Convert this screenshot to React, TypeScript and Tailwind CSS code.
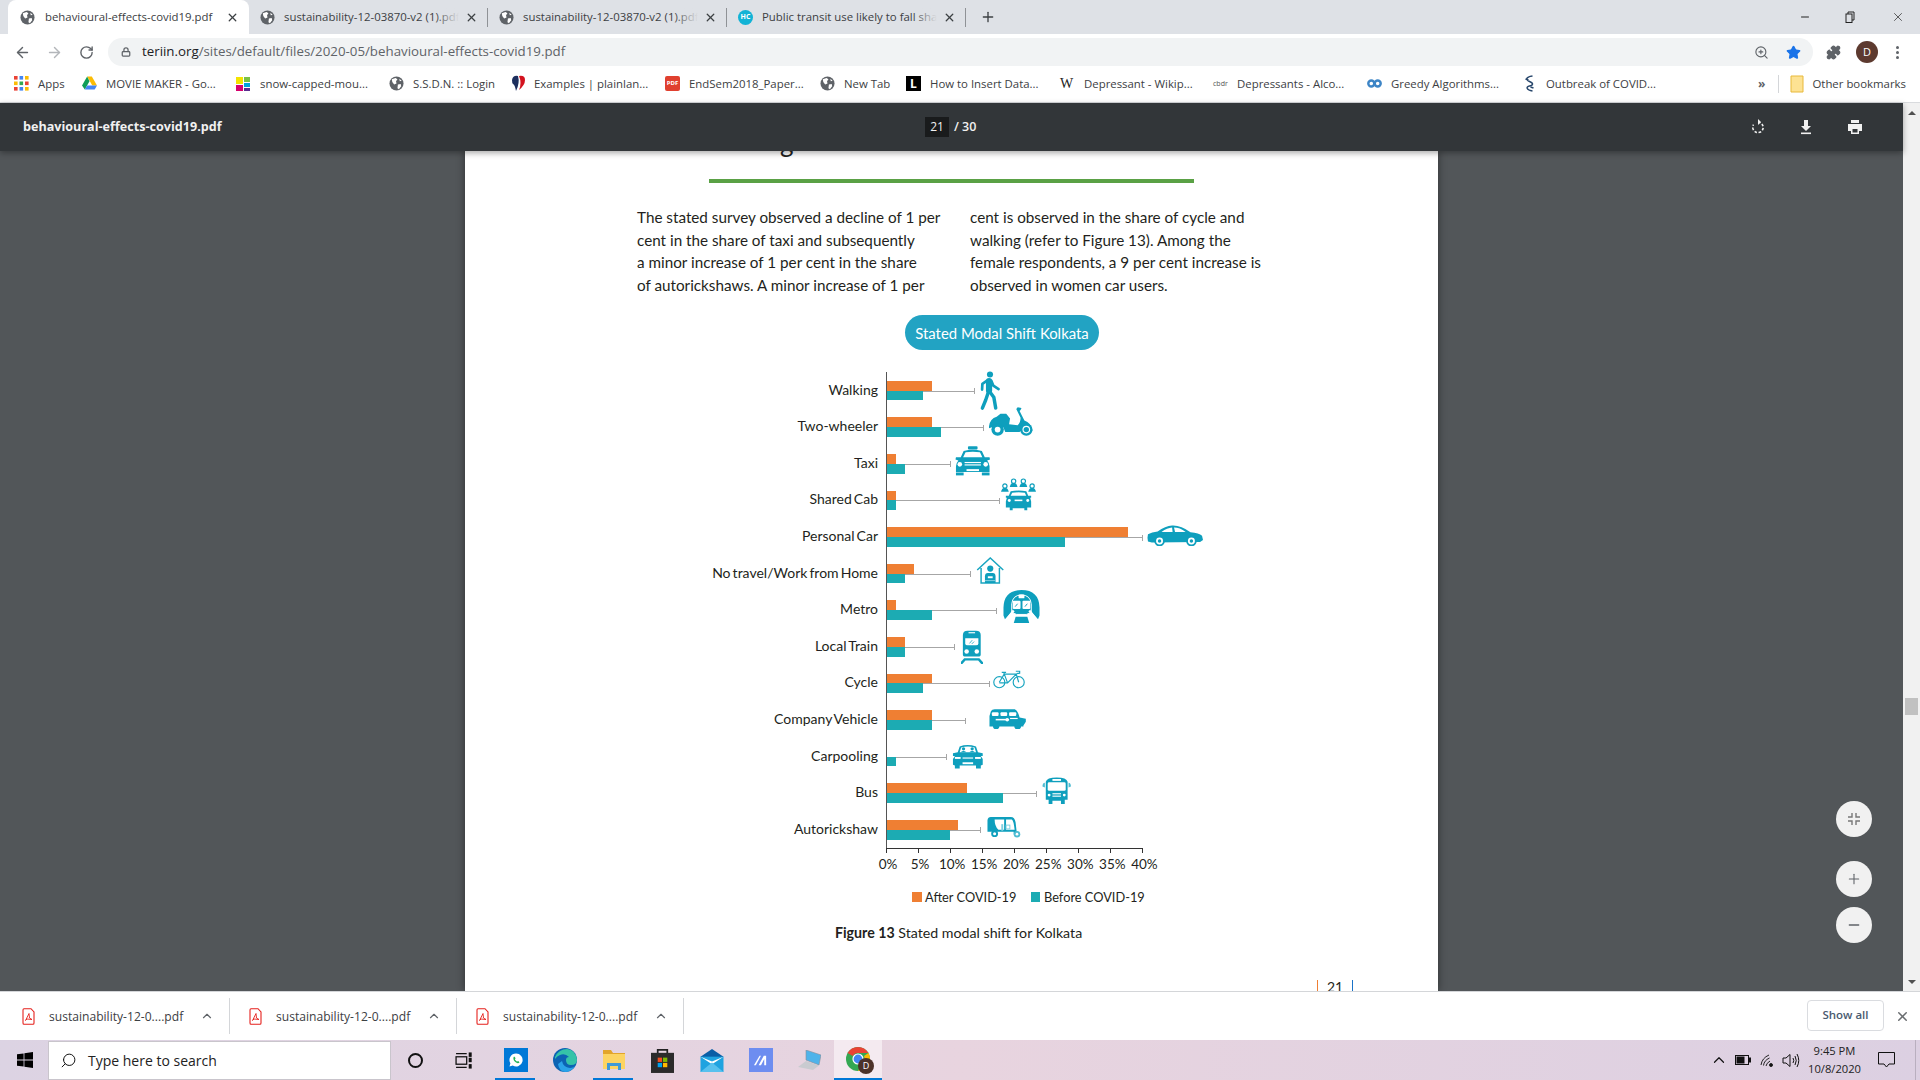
import React from "react";
import { ArrowLeft, ArrowRight, RotateCw, Lock, ZoomIn, Star, Puzzle, X, Plus, Minus, ChevronUp, Search } from "lucide-react";

const Globe = ({ className = "" }: { className?: string }) => (
  <svg viewBox="0 0 16 16" className={className}>
    <circle cx="8" cy="8" r="7.5" fill="#5f6368" />
    <path d="M3 3.5 L7 2 L9 3.5 L7.5 5.5 L8 8 L5.5 9 L3.5 6.5Z M9.5 9 L12.5 8.5 L13 11 L10.5 14 L9 13Z M11 3 L13.5 5 L11.5 5.5Z" fill="#fff" />
  </svg>
);

function Tab({ title, icon, divider = true }: { title: string; icon: React.ReactNode; divider?: boolean }) {
  return (
    <div className="relative flex h-[34px] w-[239px] shrink-0 items-center pl-[11px]">
      {icon}
      <span className="relative ml-[9px] w-[175px] overflow-hidden whitespace-nowrap text-[11.4px] text-[#3c4043]">
        {title}
        <span className="absolute right-0 top-0 h-full w-[24px] bg-gradient-to-r from-transparent to-[#dee1e6]" />
      </span>
      <X size={13} strokeWidth={2.4} className="ml-[6px] text-[#3c4043]" />
      {divider && <span className="absolute right-0 top-[8px] h-[19px] w-px bg-[#8f9296]" />}
    </div>
  );
}

const marks = [
  { w: "w-[68px]", t: "Apps", i: <svg viewBox="0 0 15 15" className="h-[15px] w-[15px]">{[0, 5.5, 11].map((x, a) => [0, 5.5, 11].map((y, b) => <rect key={`${a}${b}`} x={x} y={y} width="3.6" height="3.6" fill={["#ea4335", "#4285f4", "#fbbc05", "#34a853"][(a + b * 2) % 4]} />))}</svg> },
  { w: "w-[154px]", t: "MOVIE MAKER - Go...", i: <svg viewBox="0 0 16 15" className="h-[15px] w-[15px]"><path d="M5.5 0H10.5L16 9.5H11Z" fill="#fbbc05" /><path d="M5.5 0L8 5 3 14 0 9.5Z" fill="#0f9d58" /><path d="M3 14L5.5 9.5H16L13.5 14Z" fill="#4285f4" /></svg> },
  { w: "w-[153px]", t: "snow-capped-mou...", i: <svg viewBox="0 0 14 14" className="h-[14px] w-[14px]"><rect width="7" height="7" fill="#f4e300" /><rect x="8" width="6" height="5" fill="#7ac143" /><rect y="8" width="7" height="6" fill="#d6006d" /><rect x="8" y="6" width="6" height="4" fill="#00a3da" /><rect x="8" y="11" width="6" height="3" fill="#5b2d90" /></svg> },
  { w: "w-[121px]", t: "S.S.D.N. :: Login", i: <Globe className="h-[15px] w-[15px]" /> },
  { w: "w-[155px]", t: "Examples | plainlan...", i: <svg viewBox="0 0 17 17" className="h-[17px] w-[17px]"><path d="M2 5 Q3 0 8 1 Q10 8 6 16 Q5 10 3 9 Q2 8 2 5Z" fill="#1d2f5e" /><path d="M9 1 Q15 0 15 5 Q15 10 9 15 Q12 8 9 1Z" fill="#d3121e" /></svg> },
  { w: "w-[155px]", t: "EndSem2018_Paper...", i: <span className="flex h-[15px] w-[15px] items-center justify-center rounded-[2px] bg-[#e0402f] text-[6px] font-bold text-white">PDF</span> },
  { w: "w-[86px]", t: "New Tab", i: <Globe className="h-[15px] w-[15px]" /> },
  { w: "w-[154px]", t: "How to Insert Data...", i: <span className="flex h-[15px] w-[15px] items-center justify-center bg-black text-[12px] font-bold leading-none text-white">L</span> },
  { w: "w-[153px]", t: "Depressant - Wikip...", i: <span className="w-[15px] font-['Liberation_Serif',serif] text-[14px] leading-none text-[#222]">W</span> },
  { w: "w-[154px]", t: "Depressants - Alco...", i: <span className="w-[15px] text-[7px] leading-none text-[#555]">cbdr</span> },
  { w: "w-[155px]", t: "Greedy Algorithms...", i: <svg viewBox="0 0 16 10" className="h-[15px] w-[15px]" fill="none" stroke="#3d85c6" strokeWidth="2.6"><circle cx="4.6" cy="5" r="3.2" /><circle cx="11.4" cy="5" r="3.2" /></svg> },
  { w: "w-[140px]", t: "Outbreak of COVID...", i: <svg viewBox="0 0 14 17" className="h-[17px] w-[15px]" fill="none" stroke="#27466b" strokeWidth="1.5"><path d="M10 1 C3 2 3 5 7 6.5 C11 8 11 10 7 11 C3 12 4 15 10 16 M3 4 L6 5 M8 12 L11 13" /></svg> },
];

const rows: { label: string; a: number; b: number; end: number; icon: React.ReactNode }[] = [
  {
    label: "Walking", a: 45, b: 36, end: 87,
    icon: <svg viewBox="0 0 21 40" className="absolute left-[92.5px] top-[-1.7px] h-[39px] w-[20px] overflow-visible" fill="none" stroke="#0e9fbd" strokeLinecap="round" strokeLinejoin="round"><circle cx="10.5" cy="3.2" r="3.2" fill="#0e9fbd" stroke="none" /><path d="M9.5 10 L9.5 20" strokeWidth="6.5" /><path d="M7 10 L2.5 13 L2.2 19" strokeWidth="2.8" /><path d="M12 10 L14 15 L19.5 18.5" strokeWidth="2.8" /><path d="M9 21 L6 30 L2.5 38.5" strokeWidth="3.6" /><path d="M10 21 L14.5 27 L16.5 38.5" strokeWidth="3.6" /></svg>,
  },
  {
    label: "Two-wheeler", a: 45, b: 54, end: 96,
    icon: <svg viewBox="0 0 46 31" className="absolute left-[102px] top-[-3.3px] h-[30px] w-[44px]" fill="#0e9fbd"><path d="M0 21 Q1 13 8 11 L12 8 L18 8 L22 13 L21 19 L30 20 Q33 17 33 12 L28.5 3 L30 1 L34 2 L33 4 L32 5 L37 15 Q44 17 45.5 26 L33 26 L32 27 L17 27 L15 22 L3 22 L0 23Z" /><circle cx="9" cy="24.5" r="6.5" /><circle cx="9" cy="24.5" r="3" fill="#fff" /><circle cx="39" cy="24.5" r="6.5" /><circle cx="39" cy="24.5" r="4" fill="#fff" /><circle cx="39" cy="24.5" r="2.8" /></svg>,
  },
  {
    label: "Taxi", a: 9, b: 18, end: 63,
    icon: <FrontCar className="absolute left-[68px] top-[0px] h-[30px] w-[35.5px]" taxi />,
  },
  {
    label: "Shared Cab", a: 9, b: 9, end: 112,
    icon: (
      <svg viewBox="0 0 36 33" className="absolute left-[113.5px] top-[-4px] h-[32.5px] w-[35px]" fill="#0e9fbd">
        {[[4, 6], [13, 1], [23, 1], [32, 6]].map(([x, y]) => (
          <g key={x}><circle cx={x} cy={y + 2} r="2.2" fill="#fff" stroke="#0e9fbd" strokeWidth="1.2" /><path d={`M${x - 4} ${y + 8} Q${x - 3} ${y + 4} ${x - 1} ${y + 4} L${x + 1} ${y + 4} Q${x + 3} ${y + 4} ${x + 4} ${y + 8}Z`} /></g>
        ))}
        <path d="M8 18 L10 13.5 Q18 12 26 13.5 L28 18 L31 18 L31 20 L30 20 L31 24 L31 30 L27 30 L27 33 L24 33 L24 31 L12 31 L12 33 L9 33 L9 30 L5 30 L5 24 L6 20 L5 20 L5 18Z" />
        <path d="M10 18 L11.5 15 Q18 14 24.5 15 L26 18Z" fill="#fff" /><circle cx="8.5" cy="23" r="1.5" fill="#fff" /><circle cx="27.5" cy="23" r="1.5" fill="#fff" /><rect x="14" y="22" width="8" height="1.6" fill="#fff" />
      </svg>
    ),
  },
  {
    label: "Personal Car", a: 240.5, b: 178, end: 255,
    icon: <svg viewBox="0 0 58 22" className="absolute left-[259.5px] top-[6px] h-[21.5px] w-[56px]" fill="#0e9fbd"><path d="M0.5 13 L1 9.5 Q5 7 11 6.5 Q19 1 26 0.5 Q35 0 45 7.5 Q54 8.5 57 11 L58 15.5 L55 17.5 L5 18 L1 17Z" /><path d="M15 7 Q21 3 26 2.5 L26.5 7Z" fill="#fff" /><path d="M28 2.5 Q34 2.5 40 7 L29 7Z" fill="#fff" /><circle cx="13" cy="16.5" r="5.5" /><circle cx="13" cy="16.5" r="3.6" fill="#fff" /><circle cx="13" cy="16.5" r="1.8" /><circle cx="46" cy="16.5" r="5.5" /><circle cx="46" cy="16.5" r="3.6" fill="#fff" /><circle cx="46" cy="16.5" r="1.8" /></svg>,
  },
  {
    label: "No travel/Work from Home", a: 27, b: 18, end: 83,
    icon: <svg viewBox="0 0 29 28" className="absolute left-[89px] top-[1.3px] h-[27px] w-[28.5px]" fill="none" stroke="#18a5c0" strokeWidth="1.5"><path d="M1 13.5 L14.5 1 L28 13.5 M5 11.5 V27 H24 V11.5" /><circle cx="14.5" cy="12" r="3.2" fill="#0e9fbd" stroke="none" /><path d="M9 27 V20 Q9 16.5 12 16.5 H17 Q20 16.5 20 20 V27Z" fill="#0e9fbd" stroke="none" /><rect x="12" y="20" width="5" height="2" fill="#fff" stroke="none" /><path d="M9 24.5 H20" stroke="#8fd3e2" strokeWidth="1" /></svg>,
  },
  {
    label: "Metro", a: 9, b: 45, end: 109,
    icon: <svg viewBox="0 0 38 34" className="absolute left-[115.5px] top-[-2.3px] h-[33.3px] w-[37px]" fill="#0e9fbd"><path d="M0.5 26 V18 Q1 0 19 0 Q37 0 37.5 18 V26 L36 30 L29 22 V15 Q28 6 19 6 Q10 6 9 15 V22 L2 30Z" /><path d="M9 14 Q10 5 19 5 Q28 5 29 14 V23 L24 25 H14 L9 23Z" fill="#0e9fbd" stroke="#fff" strokeWidth="1" /><rect x="16" y="4.5" width="6" height="4" rx="1" fill="#fff" /><rect x="10" y="11" width="8" height="8.5" rx="1" fill="#fff" /><rect x="20" y="11" width="8" height="8.5" rx="1" fill="#fff" /><path d="M12.5 17 L15 14 M22.5 17 L25 14" stroke="#0e9fbd" strokeWidth="1" /><path d="M13 27.5 H25 L27 34 H11Z" /><path d="M11 21 L5 29 M27 21 L33 29" stroke="#fff" strokeWidth="2.4" /></svg>,
  },
  {
    label: "Local Train", a: 18, b: 18, end: 67,
    icon: <svg viewBox="0 0 23 36" className="absolute left-[74px] top-[1px] h-[34.4px] w-[21.6px]" fill="#0e9fbd"><path d="M2 5 Q2 0.5 7 0.5 H16 Q21 0.5 21 5 V26 Q21 28 18 28 H5 Q2 28 2 26Z" /><rect x="8" y="2" width="7" height="1.2" fill="#fff" /><path d="M4.5 8.5 H18.5 V14 Q18.5 16 16 16 H7 Q4.5 16 4.5 14Z" fill="#fff" /><path d="M9 14 L12 10.5 M11.5 14.5 L14 12" stroke="#0e9fbd" strokeWidth="0.8" /><circle cx="6" cy="22.5" r="2.4" fill="#fff" /><circle cx="16.8" cy="22.5" r="2.4" fill="#fff" /><path d="M0.5 35 L4 31 H19 L22.5 35" fill="none" stroke="#0e9fbd" strokeWidth="2.6" strokeLinecap="round" /></svg>,
  },
  {
    label: "Cycle", a: 45, b: 36, end: 102,
    icon: <svg viewBox="0 0 33 19" className="absolute left-[106px] top-[4.8px] h-[19px] w-[32px]" fill="none" stroke="#18a5c0" strokeWidth="1"><circle cx="6.5" cy="12.3" r="5.7" strokeWidth="1.2" /><circle cx="26.5" cy="12.3" r="5.7" strokeWidth="1.2" /><path d="M6.5 12.3 L11.5 4 H24 L15 13 H6.5 M11 2.2 L15 13 M24 4 L26.5 12.3 M23.5 1 H27.5 V3 L24.5 3.5 M9 2.2 H13.5" strokeWidth="1.2" /></svg>,
  },
  {
    label: "Company Vehicle", a: 45, b: 45, end: 78,
    icon: <svg viewBox="0 0 39 21" className="absolute left-[102px] top-[7px] h-[20.7px] w-[37.3px]" fill="#0e9fbd"><path d="M0.5 17 V7 L2 2 Q3 0 6 0 H27 Q30 1 32 8.5 L38.5 10 V13 L36 17 L36 18 H0.5Z" /><rect x="3" y="3" width="7" height="4" rx="1" fill="#fff" /><rect x="12" y="3" width="7" height="4" rx="1" fill="#fff" /><rect x="21" y="3" width="7.5" height="4" rx="1" fill="#fff" /><rect x="7" y="10" width="14" height="1.6" fill="#fff" /><circle cx="19" cy="11" r="1.8" fill="#fff" /><rect x="22" y="9" width="8" height="1.2" fill="#fff" /><circle cx="7.5" cy="17.5" r="3.4" /><circle cx="30" cy="17.5" r="3.6" /></svg>,
  },
  {
    label: "Carpooling", a: 0, b: 9, end: 59,
    icon: (
      <svg viewBox="0 0 33 25" className="absolute left-[64.5px] top-[5.6px] h-[25px] w-[31.7px]" fill="#0e9fbd">
        <path d="M6 8 L8 2 Q16 -1 25 2 L27 8 L32 9 L32 12 L30 12 L32 15 V21 L30 22 V25 H25 V22 H8 V25 H3 V22 L1 21 V15 L3 12 L1 12 L1 9Z" />
        <path d="M8 8 L9.5 3 Q16.5 1 23.5 3 L25 8Z" fill="#fff" /><circle cx="12" cy="4.5" r="1.7" /><circle cx="21" cy="4.5" r="1.7" /><path d="M9 8 Q12 5.5 15 8Z M18 8 Q21 5.5 24 8Z" />
        <rect x="3" y="13" width="6" height="2" fill="#fff" /><rect x="24" y="13" width="6" height="2" fill="#fff" /><rect x="11" y="13.5" width="11" height="1.2" fill="#fff" /><rect x="11" y="18.5" width="11" height="2" fill="#fff" />
      </svg>
    ),
  },
  {
    label: "Bus", a: 80, b: 116, end: 149,
    icon: <svg viewBox="0 0 31 29" className="absolute left-[155px] top-[1.7px] h-[27.7px] w-[29.4px]" fill="#0e9fbd"><path d="M4 5 Q5 0.5 15.5 0.5 Q26 0.5 27 5 V24 H24 V28.5 H20 V25 H11 V28.5 H7 V24 H4Z" /><rect x="11" y="2" width="9" height="2" fill="#fff" /><rect x="6" y="5.5" width="19" height="9" rx="1.5" fill="#fff" /><rect x="11" y="17" width="9" height="1.2" fill="#fff" /><rect x="11" y="19.5" width="9" height="1.2" fill="#fff" /><circle cx="7.5" cy="19" r="1.5" fill="#fff" /><circle cx="23.5" cy="19" r="1.5" fill="#fff" /><path d="M0.5 10 Q0.5 6 3 6 V11Z M30.5 10 Q30.5 6 28 6 V11Z" fill="#4fbcd2" /></svg>,
  },
  {
    label: "Autorickshaw", a: 71, b: 63, end: 93,
    icon: <svg viewBox="0 0 36 22" className="absolute left-[100px] top-[4.4px] h-[22px] w-[34.3px]" fill="#0e9fbd"><path d="M0.5 16 V4 Q1 0.5 4 0.5 H25 Q29 0.5 30 6 L31 15 L35 19 H28 V16 H0.5Z" /><path d="M8 3 H18 V14 H12 Q8 10 8 3Z M20 3 H26 Q28 4 29 14 H20Z" fill="#fff" /><rect x="15" y="8" width="2" height="7" fill="#7fd0e0" /><rect x="20" y="9" width="4" height="4" fill="none" stroke="#7fd0e0" /><circle cx="8" cy="18" r="3.6" /><circle cx="8" cy="18" r="1.6" fill="#fff" /><circle cx="31.5" cy="18.5" r="3.4" fill="#4fbcd2" /><circle cx="31.5" cy="18.5" r="1.4" fill="#fff" /></svg>,
  },
];

function FrontCar({ className = "", taxi = false }: { className?: string; taxi?: boolean }) {
  return (
    <svg viewBox="0 0 37 31" className={className} fill="#0e9fbd">
      {taxi && <rect x="13.5" y="0" width="10" height="3.4" rx="1" />}
      <path d="M6 11.5 L9 5 Q18.5 2.5 28 5 L31 11.5 L36 11.5 L36.5 14 L33.5 15 Q36 18 36 21 V27 H1 V21 Q1 18 3.5 15 L0.5 14 L1 11.5Z" />
      <path d="M8.5 11.5 L11 6.5 Q18.5 5 26 6.5 L28.5 11.5Z" fill="#fff" />
      <circle cx="5" cy="19" r="2.4" fill="#fff" /><circle cx="32" cy="19" r="2.4" fill="#fff" />
      <rect x="10" y="16.5" width="17" height="1.2" fill="#fff" /><rect x="10" y="19" width="17" height="1.2" fill="#fff" /><rect x="12" y="24" width="13" height="2" fill="#fff" />
      <rect x="1" y="27.5" width="8" height="3" /><rect x="28" y="27.5" width="8" height="3" />
    </svg>
  );
}

const pct = ["0%", "5%", "10%", "15%", "20%", "25%", "30%", "35%", "40%"];

const PdfIcon = () => (
  <svg viewBox="0 0 13 17" className="h-[17px] w-[13px]" fill="none" stroke="#e5211d" strokeWidth="1.1"><path d="M1 2 Q1 .7 2 .7 H9 L12 4 V15 Q12 16.3 11 16.3 H2 Q1 16.3 1 15Z" /><path d="M3.5 12.5 L7 5.5 L7.5 10 L10 11.5 L5 11Z" strokeWidth=".9" /></svg>
);

function DownloadItem() {
  return (
    <div className="relative flex h-[36px] w-[227px] shrink-0 items-center">
      <span className="ml-[19px]"><PdfIcon /></span>
      <span className="ml-[14px] mt-[2px] w-[151px] whitespace-nowrap text-[12.1px] text-[#3c4043]">sustainability-12-0....pdf</span>
      <ChevronUp size={14} strokeWidth={2} className="text-[#5f6368]" />
      <span className="absolute right-0 top-0 h-full w-px bg-[#d4d6d9]" />
    </div>
  );
}

const Round = ({ children }: { children: React.ReactNode }) => (
  <div className="flex h-[36px] w-[36px] items-center justify-center rounded-full bg-[#f1f1f1] text-[#5f6368]">{children}</div>
);

const Under = ({ children, bar = false }: { children: React.ReactNode; bar?: boolean }) => (
  <div className="relative flex h-full w-[49px] shrink-0 items-center justify-center">
    {children}
    {bar && <span className="absolute bottom-0 left-[4px] h-[2px] w-[40px] bg-[#0078d7]" />}
  </div>
);

export default function App() {
  return (
    <div className="flex h-[1080px] w-[1920px] flex-col overflow-hidden bg-white font-['Open_Sans',sans-serif]">
      {/* Tab strip */}
      <div className="flex h-[34px] shrink-0 items-center bg-[#dee1e6] pl-[8px]">
        <div className="flex h-[34px] w-[241px] shrink-0 items-center rounded-t-[8px] bg-white pl-[12px]">
          <Globe className="h-[15px] w-[15px]" />
          <span className="ml-[10px] w-[172px] whitespace-nowrap text-[11.4px] text-[#3c4043]">behavioural-effects-covid19.pdf</span>
          <X size={13} strokeWidth={2.4} className="ml-[9px] text-[#3c4043]" />
        </div>
        <Tab title="sustainability-12-03870-v2 (1).pdf" icon={<Globe className="h-[15px] w-[15px]" />} />
        <Tab title="sustainability-12-03870-v2 (1).pdf" icon={<Globe className="h-[15px] w-[15px]" />} />
        <Tab title="Public transit use likely to fall sharply" icon={<span className="flex h-[15px] w-[15px] items-center justify-center rounded-full bg-[#12b3d6] text-[7px] font-bold text-white">HC</span>} />
        <Plus size={16} strokeWidth={2} className="ml-[14px] text-[#3c4043]" />
        <div className="flex-1" />
        <Minus size={12} className="mr-[34px] text-[#222]" />
        <svg viewBox="0 0 10 12" className="mr-[36px] h-[12px] w-[10px]" fill="none" stroke="#222" strokeWidth="1"><rect x="1" y="3" width="6" height="8.5" /><path d="M3 3V1H9V9H7" /></svg>
        <X size={14} strokeWidth={1.2} className="mr-[15px] text-[#222]" />
      </div>
      {/* Toolbar */}
      <div className="flex h-[34px] shrink-0 items-center bg-white pl-[14px] pr-[14px] pt-[2px]">
        <ArrowLeft size={17} strokeWidth={2} className="text-[#5f6368]" />
        <ArrowRight size={17} strokeWidth={2} className="ml-[15px] text-[#b3b6ba]" />
        <RotateCw size={15} strokeWidth={2.2} className="ml-[16px] text-[#5f6368]" />
        <div className="ml-[14px] flex h-[28px] w-[1705px] items-center rounded-full bg-[#f1f3f4] pl-[13px] pr-[12px]">
          <Lock size={10} strokeWidth={3} className="text-[#5f6368]" />
          <span className="ml-[11px] whitespace-nowrap text-[13.3px] text-[#5f6368]"><span className="text-[#202124]">teriin.org</span>/sites/default/files/2020-05/behavioural-effects-covid19.pdf</span>
          <div className="flex-1" />
          <ZoomIn size={15} strokeWidth={1.8} className="text-[#5f6368]" />
          <Star size={15} className="ml-[17px] fill-[#1a73e8] text-[#1a73e8]" />
        </div>
        <Puzzle size={15} className="ml-[13px] fill-[#5f6368] text-[#5f6368]" />
        <span className="ml-[15px] flex h-[22px] w-[22px] items-center justify-center rounded-full bg-[#5d3a2f] text-[11px] text-white">D</span>
        <span className="ml-[18px] flex flex-col gap-[2px]"><i className="h-[3px] w-[3px] rounded-full bg-[#5f6368]" /><i className="h-[3px] w-[3px] rounded-full bg-[#5f6368]" /><i className="h-[3px] w-[3px] rounded-full bg-[#5f6368]" /></span>
      </div>
      {/* Bookmarks */}
      <div className="flex h-[35px] shrink-0 items-center border-b border-[#d9dbde] bg-white pb-[2px] pl-[14px]">
        {marks.map((m) => (
          <div key={m.t} className={`${m.w} flex shrink-0 items-center`}>
            <span className="flex w-[24px] shrink-0 items-center">{m.i}</span>
            <span className="whitespace-nowrap text-[11.4px] text-[#3c4043]">{m.t}</span>
          </div>
        ))}
        <div className="flex-1" />
        <span className="text-[12px] font-bold text-[#5f6368]">»</span>
        <span className="ml-[13px] h-[18px] w-px bg-[#d4d6d9]" />
        <svg viewBox="0 0 14 18" className="ml-[11px] h-[18px] w-[14px]"><path d="M1 1H13V17H1Z" fill="#fde293" stroke="#e8b93b" strokeWidth="1" /></svg>
        <span className="ml-[8px] mr-[14px] whitespace-nowrap text-[11.4px] text-[#3c4043]">Other bookmarks</span>
      </div>
      {/* Viewer */}
      <div className="flex min-h-0 flex-1">
        <div className="relative flex min-w-0 flex-1 flex-col bg-[#525659]">
          <div className="relative z-10 flex h-[48px] shrink-0 items-center bg-[#323639] shadow-[0_2px_6px_rgba(0,0,0,0.35)]">
            <span className="ml-[23px] w-[902px] text-[12.6px] font-bold text-[#f1f1f1]">behavioural-effects-covid19.pdf</span>
            <span className="flex h-[20px] w-[24px] items-center justify-center bg-[#191b1c] text-[12px] text-[#f1f1f1]">21</span>
            <span className="ml-[5px] text-[12.5px] font-semibold text-[#f1f1f1]">/ 30</span>
            <div className="flex-1" />
            <svg viewBox="0 0 16 16" className="mr-[32px] h-[16px] w-[16px]" fill="none" stroke="#f1f1f1" strokeWidth="1.6"><path d="M8 3.2A5.2 5.2 0 1 1 3.5 5.7" strokeDasharray="2.6 1.6" /><path d="M8 0V6L11 3Z" fill="#f1f1f1" stroke="none" /></svg>
            <svg viewBox="0 0 16 16" className="mr-[33px] h-[16px] w-[16px]" fill="#f1f1f1"><path d="M6 1H10V7H13L8 12 3 7H6Z" /><rect x="3" y="13.5" width="10" height="1.6" /></svg>
            <svg viewBox="0 0 16 16" className="mr-[40px] h-[16px] w-[16px]" fill="#f1f1f1"><path d="M4 1H12V4H4Z" /><path d="M1 5H15V12H12V15H4V12H1ZM5.5 10V13.5H10.5V10Z" fillRule="evenodd" /></svg>
          </div>
          <div className="min-h-0 flex-1 overflow-hidden pl-[465px]">
            <div className="relative h-[840px] w-[973px] overflow-hidden bg-white font-['Lato',sans-serif] text-[#231f20] shadow-[0_0_8px_rgba(0,0,0,0.45)]">
              <div className="h-[28px] overflow-hidden pl-[315px]">
                <div className="mt-[-25px] text-[26px] leading-[32px]">g</div>
              </div>
              <div className="ml-[244px] h-[4px] w-[485px] bg-[#5aa145]" />
              <div className="ml-[172px] mt-[23px] flex text-[15.25px] leading-[22.6px]">
                <div className="w-[333px] whitespace-nowrap">
                  <div>The stated survey observed a decline of 1 per</div>
                  <div>cent in the share of taxi and subsequently</div>
                  <div>a minor increase of 1 per cent in the share</div>
                  <div>of autorickshaws. A minor increase of 1 per</div>
                </div>
                <div className="whitespace-nowrap">
                  <div>cent is observed in the share of cycle and</div>
                  <div>walking (refer to Figure 13). Among the</div>
                  <div>female respondents, a 9 per cent increase is</div>
                  <div>observed in women car users.</div>
                </div>
              </div>
              <div className="ml-[440px] mt-[19px] flex h-[35px] w-[194px] items-center justify-center rounded-full bg-[#22a3c3] text-[14.9px] text-white">Stated Modal Shift Kolkata</div>
              {/* Chart */}
              <div className="mt-[22px] flex flex-col">
                {rows.map((r) => (
                  <div key={r.label} className="flex h-[36.6px] shrink-0 items-center">
                    <div className="mt-[-3px] w-[413px] whitespace-nowrap text-right text-[14px] [word-spacing:-1.5px]">{r.label}</div>
                    <div className="relative ml-[8px] flex h-full w-[300px] flex-col justify-center border-l border-[#555]">
                      <span className="absolute left-0 top-1/2 h-px bg-[#a6a6a6]" style={{ width: r.end }} />
                      <span className="absolute top-[calc(50%-2.5px)] h-[6px] w-px bg-[#a6a6a6]" style={{ left: r.end }} />
                      <div className="relative h-[9.8px] bg-[#ef7f33]" style={{ width: r.a }} />
                      <div className="relative h-[9.8px] bg-[#1cabb3]" style={{ width: r.b }} />
                      {r.icon}
                    </div>
                  </div>
                ))}
              </div>
              <div className="ml-[421px] flex h-[5px] w-[257px] border-t border-[#333]">
                {pct.slice(0, 8).map((p) => <div key={p} className="h-full w-[32.05px] border-l border-[#333]" />)}
                <div className="h-full border-l border-[#333]" />
              </div>
              <div className="ml-[407px] mt-[2px] flex text-[13.5px] leading-[18px]">
                {pct.map((p) => <div key={p} className="w-[32.05px] shrink-0 whitespace-nowrap text-center">{p}</div>)}
              </div>
              <div className="ml-[447px] mt-[15px] flex items-center text-[12.8px] leading-[18px]">
                <span className="h-[10px] w-[10px] bg-[#ef7f33]" />
                <span className="ml-[3px] w-[106px] whitespace-nowrap">After COVID-19</span>
                <span className="h-[10px] w-[9px] bg-[#1cabb3]" />
                <span className="ml-[4px] whitespace-nowrap">Before COVID-19</span>
              </div>
              <div className="ml-[370px] mt-[18px] whitespace-nowrap text-[14.2px] leading-[18px]"><b>Figure 13</b> Stated modal shift for Kolkata</div>
              <div className="absolute bottom-[-3px] left-[852px] flex items-center gap-[9px] text-[14px] leading-[14px]">
                <span className="h-[14px] w-px bg-[#ef7f33]" />21<span className="h-[14px] w-px bg-[#1a73c8]" />
              </div>
            </div>
          </div>
          <div className="absolute bottom-[48px] right-[31px] z-10 flex flex-col items-center">
            <Round>
              <svg viewBox="0 0 14 14" className="h-[14px] w-[14px]" fill="none" stroke="#777" strokeWidth="1.4"><path d="M5 1V5H1M9 1V5H13M5 13V9H1M9 13V9H13" /></svg>
            </Round>
            <div className="h-[24px]" />
            <Round><Plus size={16} strokeWidth={1.6} /></Round>
            <div className="h-[10px]" />
            <Round><Minus size={16} strokeWidth={2} /></Round>
          </div>
        </div>
        {/* Scrollbar */}
        <div className="flex w-[17px] shrink-0 flex-col items-center bg-[#f1f1f1]">
          <div className="mt-[8px] h-0 w-0 border-x-[4px] border-b-[4px] border-x-transparent border-b-[#505050]" />
          <div className="mt-[583px] h-[17px] w-[13px] bg-[#c1c1c1]" />
          <div className="flex-1" />
          <div className="mb-[7px] h-0 w-0 border-x-[4px] border-t-[4px] border-x-transparent border-t-[#505050]" />
        </div>
      </div>
      {/* Downloads */}
      <div className="flex h-[49px] shrink-0 items-center border-t border-[#d4d6d9] bg-white pl-[3px]">
        <DownloadItem />
        <DownloadItem />
        <DownloadItem />
        <div className="flex-1" />
        <div className="mb-[2px] flex h-[31px] w-[77px] items-center justify-center rounded-[4px] border border-[#dadce0] text-[11.5px] font-semibold text-[#4a5a70]">Show all</div>
        <X size={15} strokeWidth={2.4} className="ml-[11px] mr-[10px] text-[#6a6d70]" />
      </div>
      {/* Taskbar */}
      <div className="flex h-[40px] shrink-0 items-center bg-gradient-to-r from-[#dcd3e3] via-[#e8d4df] to-[#dcd0e2] text-[#111]">
        <svg viewBox="0 0 16 16" className="ml-[17px] h-[16px] w-[16px]" fill="#000"><path d="M0 2.3L6.6 1.4V7.6H0ZM7.4 1.3L16 0V7.6H7.4ZM0 8.4H6.6V14.6L0 13.7ZM7.4 8.4H16V16L7.4 14.7Z" /></svg>
        <div className="ml-[15px] flex h-[39px] w-[343px] items-center border border-[#c9c5cc] bg-white pl-[11px]">
          <Search size={17} strokeWidth={1.4} className="-scale-x-100 text-[#111]" />
          <span className="ml-[11px] whitespace-nowrap text-[14px] text-[#222]">Type here to search</span>
        </div>
        <div className="ml-[17px] h-[15px] w-[15px] rounded-full border-[2.5px] border-[#111]" />
        <svg viewBox="0 0 16 16" className="ml-[32px] h-[17px] w-[17px]" fill="none" stroke="#111" strokeWidth="1.2"><rect x="1" y="4.5" width="10" height="7" /><path d="M1 1.5H11M1 14.5H11" /><rect x="13.5" y="1" width="1.6" height="3" fill="#111" /><rect x="13.5" y="6" width="1.6" height="3" fill="#111" /><rect x="13.5" y="12" width="1.6" height="3" fill="#111" /></svg>
        <div className="ml-[19px] flex h-full">
          <Under bar>
            <div className="flex h-[24px] w-[24px] items-center justify-center bg-[#0078d7]"><svg viewBox="0 0 16 16" className="h-[16px] w-[16px]"><path d="M8 1.5A6.5 6.5 0 0 0 2.4 11.3L1.5 14.5 4.8 13.6A6.5 6.5 0 1 0 8 1.5Z" fill="#fff" /><path d="M5.8 4.8C5 6 5.2 8 7 9.8 8.8 11.4 10.6 11.5 11.5 10.4L10.3 9 9.2 9.6C8.2 9.2 7.2 8 6.9 7.2L7.6 6.2 6.6 4.7Z" fill="#25b35a" /></svg></div>
          </Under>
          <Under>
            <svg viewBox="0 0 24 24" className="h-[24px] w-[24px]"><circle cx="12" cy="12" r="12" fill="#0c63b3" /><path d="M2 9 Q6 1 14 1 Q23 2 24 12 Q24 17 18 17 Q13 17 13 12 Q13 9 16 9 Q12 5 7 7 Q4 8 2 11Z" fill="#35c3a8" /><path d="M9 13 Q10 19 17 20 Q20 20 22 18 Q18 24 12 24 Q6 23 5 16Z" fill="#2ba2e8" /></svg>
          </Under>
          <Under bar>
            <svg viewBox="0 0 22 22" className="h-[22px] w-[22px]"><path d="M0 1H8L10 4H22V8H0Z" fill="#e2a52b" /><path d="M0 5H22V20H0Z" fill="#fcd462" /><path d="M4 14H18V21H15V17H7V21H4Z" fill="#3f9ad8" /></svg>
          </Under>
          <Under>
            <svg viewBox="0 0 24 26" className="h-[25px] w-[23px]"><path d="M7 6V2H17V6" fill="none" stroke="#222" strokeWidth="1.8" /><rect y="5" width="24" height="21" fill="#2b2b2b" /><rect x="7" y="10" width="4.5" height="4.5" fill="#f25022" /><rect x="12.5" y="10" width="4.5" height="4.5" fill="#7fba00" /><rect x="7" y="15.5" width="4.5" height="4.5" fill="#00a4ef" /><rect x="12.5" y="15.5" width="4.5" height="4.5" fill="#ffb900" /></svg>
          </Under>
          <Under>
            <svg viewBox="0 0 24 24" className="h-[23px] w-[24px]"><path d="M0 8L12 0 24 8 12 16Z" fill="#0a5ea6" /><path d="M0 8H24V24H0Z" fill="#1fa3e0" /><path d="M0 8L12 16 24 8 12 13Z" fill="#fff" /><path d="M0 24L12 14 24 24Z" fill="#57c1ee" /></svg>
          </Under>
          <Under>
            <div className="flex h-[24px] w-[24px] items-center justify-center bg-[#6d8df0]"><svg viewBox="0 0 16 16" className="h-[15px] w-[15px]" fill="#fff"><path d="M1 13L7 3H8.5L3 13Z" /><path d="M6 13L11.5 3H14V13H12V6.5L8.5 13Z" /></svg></div>
          </Under>
          <Under>
            <svg viewBox="0 0 23 20" className="h-[20px] w-[23px]"><path d="M8 0L23 5 21 15 8 10Z" fill="#4fb3ea" stroke="#8a8f98" strokeWidth=".6" /><path d="M8 11L21 15.5 15 20 0 17Z" fill="#c9cbd0" /></svg>
          </Under>
          <div className="relative flex h-full w-[48px] shrink-0 items-center justify-center border-b-[2px] border-[#0078d7] bg-[#f4eaf0]">
            <div className="relative h-[24px] w-[24px]">
              <svg viewBox="0 0 24 24" className="h-[24px] w-[24px]"><circle cx="12" cy="12" r="12" fill="#34a853" /><path d="M12 0A12 12 0 0 1 22.4 6H12A6 6 0 0 0 6.8 9L1.6 6A12 12 0 0 1 12 0Z" fill="#ea4335" /><path d="M22.4 6A12 12 0 0 1 12 24L17.2 15A6 6 0 0 0 18 9Z" fill="#fbbc05" /><circle cx="12" cy="12" r="5" fill="#4285f4" stroke="#fff" strokeWidth="1.2" /></svg>
              <span className="absolute bottom-[-3px] right-[-4px] flex h-[16px] w-[16px] items-center justify-center rounded-full bg-[#4c3229] text-[9px] text-white">D</span>
            </div>
          </div>
        </div>
        <div className="flex-1" />
        <ChevronUp size={18} strokeWidth={1.6} className="mr-[7px]" />
        <svg viewBox="0 0 16 10" className="mr-[9px] h-[10px] w-[16px]" fill="none" stroke="#111"><rect x=".5" y=".5" width="13" height="9" /><rect x="2" y="2" width="7" height="6" fill="#111" /><rect x="14" y="3" width="1.5" height="4" fill="#111" /></svg>
        <svg viewBox="0 0 16 14" className="mr-[6px] h-[14px] w-[16px]" fill="none" stroke="#222" strokeWidth="1"><path d="M1 12 Q2 5 9 2 M3.5 12.5 Q4 7.5 9.5 5 M6 13 Q6.5 10 10 8" /><circle cx="11" cy="12" r="1.5" fill="#111" /></svg>
        <svg viewBox="0 0 18 15" className="mr-[5px] h-[15px] w-[18px]" fill="none" stroke="#111" strokeWidth="1"><path d="M1 5H4L8 1.5V13.5L4 10H1Z" /><path d="M11 5Q12.5 7.5 11 10M13 3Q15.5 7.5 13 12M15 1Q18.5 7.5 15 14" /></svg>
        <div className="mr-[13.5px] flex w-[60px] flex-col items-center text-[11.2px] leading-[18px] text-[#222]"><span>9:45 PM</span><span className="whitespace-nowrap">10/8/2020</span></div>
        <svg viewBox="0 0 17 16" className="mr-[20px] h-[16px] w-[17px]" fill="none" stroke="#111" strokeWidth="1"><path d="M.5.5H16.5V12H11L8.5 15 6 12H.5Z" /></svg>
        <span className="mr-[4px] h-full w-px bg-[#b9afbf]" />
      </div>
    </div>
  );
}
